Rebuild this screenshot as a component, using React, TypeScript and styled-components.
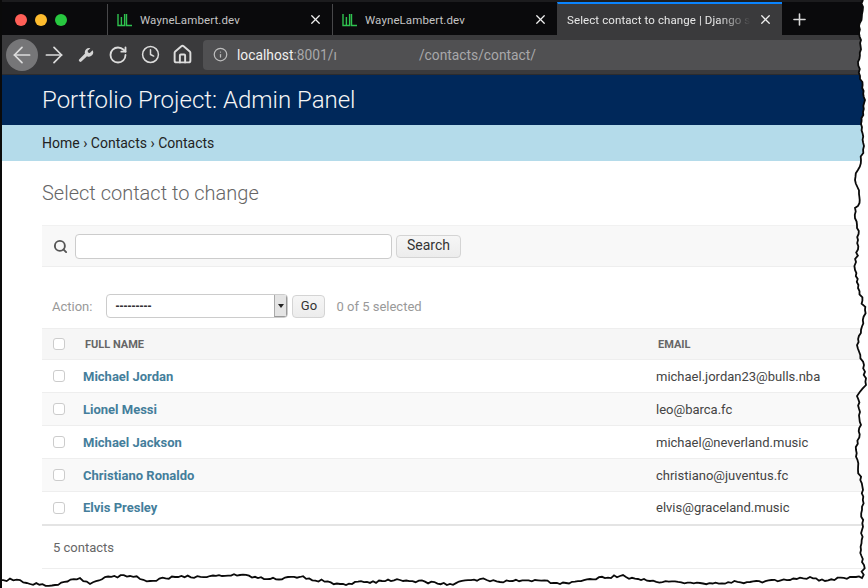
import React from "react";
import styled, { createGlobalStyle } from "styled-components";
import { ArrowLeft, ArrowRight, RotateCw, Clock, House, Info, X, Plus, Search } from "lucide-react";

const Global = createGlobalStyle`
  html, body { margin: 0; padding: 0; background: #fff; }
  body { font-family: Roboto, "Liberation Sans", sans-serif; }
  * { box-sizing: border-box; }
`;

const Page = styled.div`
  position: relative;
  width: 868px;
  height: 588px;
  overflow: hidden;
  background: #fff;
  border-left: 2px solid #0a0a0a;
`;
const TabBar = styled.div`
  display: flex;
  height: 35px;
  background: #0a0a0c;
  padding-top: 2px;
  border-top: 2px solid #1c1c1e;
`;
const Lights = styled.div`
  display: flex;
  align-items: center;
  gap: 8px;
  width: 105px;
  padding-left: 13px;
  flex: none;
`;
const Light = styled.span<{ $c: string }>`
  width: 12px;
  height: 12px;
  border-radius: 50%;
  background: ${(p) => p.$c};
`;
const Tab = styled.div<{ $active?: boolean }>`
  display: flex;
  align-items: center;
  gap: 7px;
  flex: none;
  width: 225px;
  height: ${(p) => (p.$active ? "33px" : "31px")};
  margin-top: ${(p) => (p.$active ? "-2px" : "0")};
  padding: 0 9px;
  font-size: 11.5px;
  letter-spacing: 0.1px;
  color: ${(p) => (p.$active ? "#e8e8e8" : "#c4c4c4")};
  background: ${(p) => (p.$active ? "#3a3a3c" : "transparent")};
  border-left: 1px solid ${(p) => (p.$active ? "transparent" : "#48484a")};
  border-top: ${(p) => (p.$active ? "2px solid #0a84ff" : "0")};
`;
const TabTitle = styled.span`
  flex: 1;
  white-space: nowrap;
`;
const FadedTitle = styled(TabTitle)`
  mask-image: linear-gradient(to right, #000 82%, transparent 100%);
`;
const NewTab = styled.div`
  display: flex;
  align-items: center;
  padding-left: 8px;
  color: #d8d8d8;
`;
const NavBar = styled.div`
  display: flex;
  align-items: center;
  height: 40px;
  background: #3a3a3c;
  padding: 0 0 0 4px;
  border-bottom: 1px solid #2c2c2e;
`;
const NavBtn = styled.div<{ $round?: boolean }>`
  display: flex;
  align-items: center;
  justify-content: center;
  flex: none;
  width: 32px;
  height: 32px;
  border-radius: 50%;
  color: #dcdcdc;
  background: ${(p) => (p.$round ? "#767678" : "transparent")};
`;
const UrlBar = styled.div`
  display: flex;
  align-items: center;
  margin-left: 5px;
  flex: 1;
  height: 30px;
  margin-right: 6px;
  padding-left: 10px;
  background: #505052;
  border-radius: 4px 0 0 4px;
  font-size: 13.8px;
  color: #a8a8aa;
  white-space: nowrap;
`;
const Host = styled.span`
  color: #f0f0f0;
  margin-left: 9px;
`;
const Redacted = styled.span`
  display: inline-block;
  width: 82px;
`;
const Header = styled.div`
  height: 50px;
  display: flex;
  align-items: center;
  padding-left: 40px;
  background: #00285a;
  color: #f5f5f5;
  font-size: 24px;
  font-weight: 300;
`;
const Crumbs = styled.div`
  height: 36px;
  display: flex;
  align-items: center;
  padding-left: 40px;
  background: #b4dbea;
  font-size: 14px;
  color: #222;
`;
const Main = styled.div`
  padding: 19px 0 0 40px;
  width: 900px;
`;
const Title = styled.h1`
  margin: 0 0 19px;
  font-size: 20px;
  line-height: 26px;
  font-weight: 300;
  color: #666;
`;
const Toolbar = styled.div`
  display: flex;
  align-items: center;
  height: 42px;
  padding-left: 11px;
  background: #f8f8f8;
  border-top: 1px solid #f1f1f1;
  border-bottom: 1px solid #eee;
  color: #555;
`;
const SearchInput = styled.input`
  width: 317px;
  height: 25px;
  margin-left: 7px;
  border: 1px solid #ccc;
  border-radius: 4px;
  background: #fff;
`;
const Button = styled.button<{ $w: number; $fs: number }>`
  width: ${(p) => p.$w}px;
  height: 23px;
  margin-left: 4px;
  padding: 0 0 2px;
  border: 1px solid #d4d4d4;
  border-radius: 4px;
  background: linear-gradient(#f6f6f6, #ececec);
  font: 400 ${(p) => p.$fs}px Roboto, sans-serif;
  color: #333;
`;
const ActionRow = styled.div`
  display: flex;
  align-items: center;
  height: 24px;
  margin-top: 27px;
  margin-bottom: 10px;
  padding-left: 10px;
  font-size: 13px;
  color: #999;
`;
const SelectBox = styled.div`
  display: flex;
  width: 182px;
  height: 24px;
  margin-left: 14px;
  border: 1px solid #ccc;
  border-radius: 4px;
  background: #fff;
  overflow: hidden;
`;
const SelectValue = styled.div`
  flex: 1;
  padding: 3px 0 0 8px;
  font: 700 12px/16px "Liberation Sans", sans-serif;
  color: #333;
`;
const SelectArrow = styled.div`
  display: flex;
  align-items: center;
  justify-content: center;
  width: 13px;
  background: #e4e4e4;
  border-left: 1px solid #aaa;
  border-right: 1px solid #999;
  border-bottom: 1px solid #999;
  &::after {
    content: "";
    border-left: 3px solid transparent;
    border-right: 3px solid transparent;
    border-top: 4px solid #222;
  }
`;
const Counter = styled.span`
  margin-left: 11px;
`;
const HeadRow = styled.div`
  display: grid;
  grid-template-columns: 43px 573px 1fr;
  align-items: center;
  height: 32px;
  background: #f6f6f6;
  border-top: 1px solid #eee;
  border-bottom: 1px solid #eee;
  font-size: 11px;
  font-weight: 700;
  color: #666;
`;
const Row = styled.div<{ $alt?: boolean; $last?: boolean }>`
  display: grid;
  grid-template-columns: 41px 573px 1fr;
  align-items: center;
  height: ${(p) => (p.$last ? "34px" : "33px")};
  padding-bottom: ${(p) => (p.$last ? "1px" : "0")};
  background: ${(p) => (p.$alt ? "#f9f9f9" : "#fff")};
  border-bottom: ${(p) => (p.$last ? "2px solid #e4e4e4" : "1px solid #eee")};
  font-size: 13px;
  color: #444;
`;
const Check = styled.input.attrs({ type: "checkbox" })`
  appearance: none;
  width: 12px;
  height: 12px;
  margin: 0 0 0 11px;
  border: 1px solid #ccc;
  border-radius: 3px;
  background: #fff;
`;
const NameLink = styled.a`
  font-weight: 700;
  font-size: 13px;
  color: #447e9b;
`;
const Paginator = styled.div`
  height: 43px;
  display: flex;
  align-items: center;
  padding: 0 0 0 11px;
  font-size: 13px;
  color: #666;
  border-bottom: 1px solid #eee;
`;
const TearOverlay = styled.svg`
  position: absolute;
  left: -2px;
  top: 0;
  pointer-events: none;
`;

const Logo = () => (
  <svg width="16" height="14" viewBox="0 0 16 14" fill="none" stroke="#2fc24f" strokeWidth="1.4">
    <path d="M1 1v11.5h3.4V4M4.4 12.5h3.2V1M9.5 1v11.5h5.5" />
  </svg>
);
const WrenchIcon = () => (
  <svg width="16" height="16" viewBox="0 0 16 16" fill="#d4d4d4">
    <path d="M14.6 3.2 L11.8 6 L10 5.6 L9.6 3.8 L12.4 1.2 A4.3 4.3 0 0 0 7 6.6 L1.4 12.2 a1.4 1.4 0 0 0 2 2.2 L9 9.2 A4.3 4.3 0 0 0 14.6 3.2Z" />
  </svg>
);

function rnd(seed: number) {
  let s = seed;
  return () => {
    s = (s * 16807) % 2147483647;
    return s / 2147483647;
  };
}
function jag(points: number[][], seed: number, axis: "x" | "y") {
  const r = rnd(seed);
  const out: string[] = [];
  points.forEach((p, i) => {
    out.push(`${p[0]},${p[1]}`);
    const n = points[i + 1];
    if (!n) return;
    const d = axis === "x" ? Math.abs(n[0] - p[0]) : Math.abs(n[1] - p[1]);
    const steps = Math.floor(d / 3);
    for (let k = 1; k < steps; k++) {
      const t = k / steps;
      const j = (r() - 0.5) * 2.8;
      const x = p[0] + (n[0] - p[0]) * t + (axis === "y" ? j : 0);
      const y = p[1] + (n[1] - p[1]) * t + (axis === "x" ? j : 0);
      out.push(`${x.toFixed(1)},${y.toFixed(1)}`);
    }
  });
  return out.join(" L");
}
const rightPts = [
  [863, 0],[862, 14],[859, 26],[861, 40],[858, 62],[860, 76],[865, 100],[863, 112],[861, 124],[864, 146],[861, 160],[855, 180],[859, 194],[858, 206],[855, 208],[857, 225],[858, 240],[856, 262],[855, 270],[858, 288],[865, 310],[861, 330],[857, 345],[864, 365],[866, 385],[857, 396],[860, 412],[861, 425],[856, 450],[858, 470],[863, 490],[862, 510],[862, 530],[861, 550],[864, 565],[862, 578],
];
const bottomPts = [
  [862, 578],[850, 577],[825, 581],[810, 577],[790, 580],[750, 582],[700, 583],[650, 581],[620, 576],[590, 579],[560, 584],[535, 580],[500, 582],[480, 579],[450, 584],[400, 580],[340, 584],[300, 577],[270, 579],[240, 575],[210, 576],[175, 577],[150, 581],[130, 576],[105, 577],[90, 584],[80, 578],[55, 585],[30, 584],[20, 580],[0, 580],
];
const rightD = jag(rightPts, 4711, "y");
const bottomD = jag(bottomPts, 1234, "x");
const edge = `M${rightD} L${bottomD}`;
const outside = `${edge} L0,588 L868,588 L868,0 Z`;

const contacts = [
  ["Michael Jordan", "michael.jordan23@bulls.nba"],
  ["Lionel Messi", "leo@barca.fc"],
  ["Michael Jackson", "michael@neverland.music"],
  ["Christiano Ronaldo", "christiano@juventus.fc"],
  ["Elvis Presley", "elvis@graceland.music"],
];

export default function App() {
  return (
    <Page>
      <Global />
      <TabBar>
        <Lights>
          <Light $c="#ff5f57" />
          <Light $c="#febc2e" />
          <Light $c="#28c840" />
        </Lights>
        <Tab>
          <Logo />
          <TabTitle>WayneLambert.dev</TabTitle>
          <X size={15} color="#f0f0f0" />
        </Tab>
        <Tab>
          <Logo />
          <TabTitle>WayneLambert.dev</TabTitle>
          <X size={15} color="#f0f0f0" />
        </Tab>
        <Tab $active>
          <FadedTitle>Select contact to change | Django s</FadedTitle>
          <X size={15} color="#f0f0f0" />
        </Tab>
        <NewTab>
          <Plus size={19} />
        </NewTab>
      </TabBar>
      <NavBar>
        <NavBtn $round>
          <ArrowLeft size={26} strokeWidth={1.6} />
        </NavBtn>
        <NavBtn>
          <ArrowRight size={26} strokeWidth={1.6} />
        </NavBtn>
        <NavBtn>
          <WrenchIcon />
        </NavBtn>
        <NavBtn>
          <RotateCw size={20} strokeWidth={2.2} />
        </NavBtn>
        <NavBtn>
          <Clock size={19} strokeWidth={1.9} />
        </NavBtn>
        <NavBtn>
          <House size={21} strokeWidth={2.2} />
        </NavBtn>
        <UrlBar>
          <Info size={15} color="#bdbdbd" />
          <Host>localhost</Host>:8001/ı<Redacted />/contacts/contact/
        </UrlBar>
      </NavBar>
      <Header>Portfolio Project: Admin Panel</Header>
      <Crumbs>Home › Contacts › Contacts</Crumbs>
      <Main>
        <Title>Select contact to change</Title>
        <Toolbar>
          <Search size={15} strokeWidth={3} />
          <SearchInput />
          <Button $w={65} $fs={14}>Search</Button>
        </Toolbar>
        <ActionRow>
          Action:
          <SelectBox>
            <SelectValue>---------</SelectValue>
            <SelectArrow />
          </SelectBox>
          <Button $w={33} $fs={13}>Go</Button>
          <Counter>0 of 5 selected</Counter>
        </ActionRow>
        <HeadRow>
          <Check />
          <span>FULL NAME</span>
          <span>EMAIL</span>
        </HeadRow>
        {contacts.map(([name, email], i) => (
          <Row key={name} $alt={i % 2 === 1} $last={i === contacts.length - 1}>
            <Check />
            <NameLink>{name}</NameLink>
            <span>{email}</span>
          </Row>
        ))}
        <Paginator>5 contacts</Paginator>
      </Main>
      <TearOverlay width="868" height="588" viewBox="0 0 868 588">
        <path d={outside} fill="#fff" />
        <path d={edge} fill="none" stroke="#0a0a0a" strokeWidth="1.8" />
      </TearOverlay>
    </Page>
  );
}
